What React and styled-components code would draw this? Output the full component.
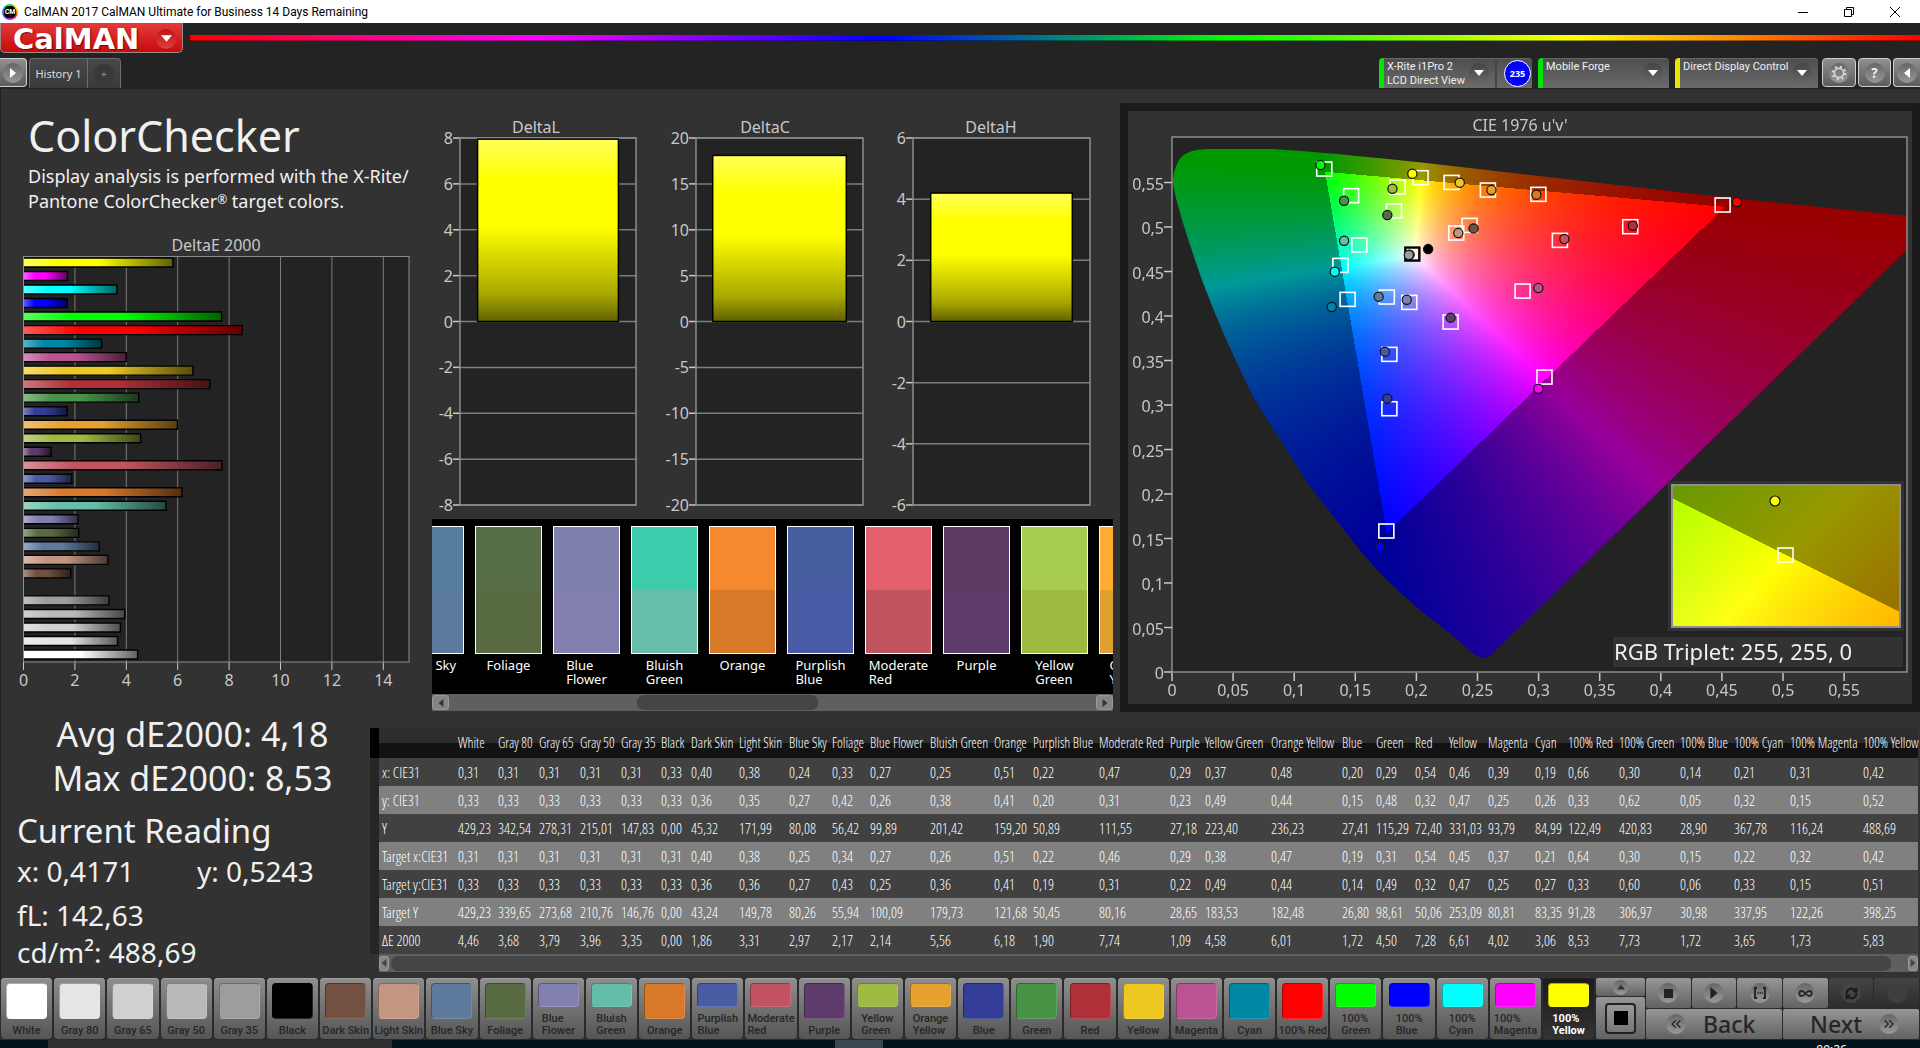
import React, { useEffect, useRef } from 'react';
import styled, { createGlobalStyle } from 'styled-components';
import { ChevronsLeft, ChevronsRight, Infinity as InfinityIcon, RefreshCw } from 'lucide-react';

const GlobalStyle = createGlobalStyle`
  * {
    box-sizing: border-box;
  }
  body {
    margin: 0;
    background: #323232;
    color: #f0f0f0;
    font-family: 'Noto Sans', 'Open Sans', sans-serif;
    overflow: hidden;
  }
  button {
    margin: 0;
    padding: 0;
    border: none;
    font-family: inherit;
    color: inherit;
    cursor: pointer;
  }
`;

/* ---------- data ---------- */

const READINGS = [
  // name, color, x, y, Y, target x, target y, target Y, dE, column width
  ['White', '#ffffff', '0,31', '0,33', '429,23', '0,31', '0,33', '429,23', '4,46', 40],
  ['Gray 80', '#e5e5e5', '0,31', '0,33', '342,54', '0,31', '0,33', '339,65', '3,68', 41],
  ['Gray 65', '#d0d0d0', '0,31', '0,33', '278,31', '0,31', '0,33', '273,68', '3,79', 41],
  ['Gray 50', '#b9b9b9', '0,31', '0,33', '215,01', '0,31', '0,33', '210,76', '3,96', 41],
  ['Gray 35', '#9d9d9d', '0,31', '0,33', '147,83', '0,31', '0,33', '146,76', '3,35', 40],
  ['Black', '#000000', '0,33', '0,33', '0,00', '0,31', '0,33', '0,00', '0,00', 30],
  ['Dark Skin', '#735042', '0,40', '0,36', '45,32', '0,40', '0,36', '43,24', '1,86', 48],
  ['Light Skin', '#c39681', '0,38', '0,35', '171,99', '0,38', '0,36', '149,78', '3,31', 50],
  ['Blue Sky', '#5e7a9c', '0,24', '0,27', '80,08', '0,25', '0,27', '80,26', '2,97', 43],
  ['Foliage', '#596b42', '0,33', '0,42', '56,42', '0,34', '0,43', '55,94', '2,17', 38],
  ['Blue Flower', '#8280b0', '0,27', '0,26', '99,89', '0,27', '0,25', '100,09', '2,14', 60],
  ['Bluish Green', '#63bda9', '0,25', '0,38', '201,42', '0,26', '0,36', '179,73', '5,56', 64],
  ['Orange', '#d87829', '0,51', '0,41', '159,20', '0,51', '0,41', '121,68', '6,18', 39],
  ['Purplish Blue', '#4a5ba5', '0,22', '0,20', '50,89', '0,22', '0,19', '50,45', '1,90', 66],
  ['Moderate Red', '#c25461', '0,47', '0,31', '111,55', '0,46', '0,31', '80,16', '7,74', 71],
  ['Purple', '#5d3c6b', '0,29', '0,23', '27,18', '0,29', '0,22', '28,65', '1,09', 35],
  ['Yellow Green', '#9eba41', '0,37', '0,49', '223,40', '0,38', '0,49', '183,53', '4,58', 66],
  ['Orange Yellow', '#e6a12e', '0,48', '0,44', '236,23', '0,47', '0,44', '182,48', '6,01', 71],
  ['Blue', '#333c96', '0,20', '0,15', '27,41', '0,19', '0,14', '26,80', '1,72', 34],
  ['Green', '#479447', '0,29', '0,48', '115,29', '0,31', '0,49', '98,61', '4,50', 39],
  ['Red', '#af3039', '0,54', '0,32', '72,40', '0,54', '0,32', '50,06', '7,28', 34],
  ['Yellow', '#edc821', '0,46', '0,47', '331,03', '0,45', '0,47', '253,09', '6,61', 39],
  ['Magenta', '#bb5393', '0,39', '0,25', '93,79', '0,37', '0,25', '80,81', '4,02', 47],
  ['Cyan', '#0087a6', '0,19', '0,26', '84,99', '0,21', '0,27', '83,35', '3,06', 33],
  ['100% Red', '#ff0000', '0,66', '0,33', '122,49', '0,64', '0,33', '91,28', '8,53', 51],
  ['100% Green', '#00ff00', '0,30', '0,62', '420,83', '0,30', '0,60', '306,97', '7,73', 61],
  ['100% Blue', '#0000ff', '0,14', '0,05', '28,90', '0,15', '0,06', '30,98', '1,72', 54],
  ['100% Cyan', '#00ffff', '0,21', '0,32', '367,78', '0,22', '0,33', '337,95', '3,65', 56],
  ['100% Magenta', '#ff00ff', '0,31', '0,15', '116,24', '0,32', '0,15', '122,26', '1,73', 73],
  ['100% Yellow', '#ffff00', '0,42', '0,52', '488,69', '0,42', '0,51', '398,25', '5,83', 58],
];

const TABLE_ROWS = ['x: CIE31', 'y: CIE31', 'Y', 'Target x:CIE31', 'Target y:CIE31', 'Target Y', 'ΔE 2000'];

const TWO_LINE = [
  'Blue Flower',
  'Bluish Green',
  'Purplish Blue',
  'Moderate Red',
  'Yellow Green',
  'Orange Yellow',
  '100% Green',
  '100% Blue',
  '100% Cyan',
  '100% Magenta',
  '100% Yellow',
];

const COMPARISONS = [
  { name: 'Blue Sky', actual: '#567d9d', target: '#5e7a9f' },
  { name: 'Foliage', actual: '#566d45', target: '#596b42' },
  { name: 'Blue\nFlower', actual: '#8080ad', target: '#8380b0' },
  { name: 'Bluish\nGreen', actual: '#3dccac', target: '#65bdaa' },
  { name: 'Orange', actual: '#f5892f', target: '#d87829' },
  { name: 'Purplish\nBlue', actual: '#465d9f', target: '#4a5ba5' },
  { name: 'Moderate\nRed', actual: '#e4606e', target: '#c25460' },
  { name: 'Purple', actual: '#5b3b62', target: '#5d3c6b' },
  { name: 'Yellow\nGreen', actual: '#a7cc4e', target: '#9eba41' },
  { name: 'Orange\nYellow', actual: '#ffac31', target: '#e0a030' },
];

// u'v' of the target squares
const TARGETS = [
  [0.1246, 0.5651], [0.2034, 0.5554], [0.2288, 0.5501], [0.2585, 0.5415], [0.2998, 0.5367],
  [0.4506, 0.5247], [0.1846, 0.5449], [0.1466, 0.5352], [0.1817, 0.5179], [0.2435, 0.5018],
  [0.2326, 0.4932], [0.1533, 0.4797], [0.3174, 0.485], [0.375, 0.5003], [0.1378, 0.4569],
  [0.1437, 0.4187], [0.1758, 0.4213], [0.1942, 0.4153], [0.228, 0.3932], [0.2869, 0.428],
  [0.1779, 0.3569], [0.3048, 0.3314], [0.1779, 0.2958], [0.1754, 0.1584],
];

const MEASURED = [
  [0.1215, 0.5696, '#00ff00'], [0.1967, 0.5599, '#ffff00'], [0.1804, 0.543, '#9eba41'],
  [0.2355, 0.5498, '#edc821'], [0.2614, 0.5415, '#e6a12e'], [0.2982, 0.5363, '#d87829'],
  [0.4623, 0.528, '#ff0000'], [0.1408, 0.5295, '#479447'], [0.1762, 0.5134, '#596b42'],
  [0.2468, 0.4984, '#735042'], [0.2343, 0.4932, '#c39681'], [0.1408, 0.4846, '#63bda9'],
  [0.3211, 0.4865, '#c25461'], [0.3771, 0.5014, '#af3039'], [0.1945, 0.469, '#ffffff'],
  [0.1938, 0.4685, '#9d9d9d'], [0.2096, 0.4752, '#000000'], [0.1332, 0.4498, '#00ffff'],
  [0.1307, 0.4101, '#0087a6'], [0.1691, 0.4217, '#5e7a9c'], [0.1921, 0.4183, '#8280b0'],
  [0.228, 0.3981, '#5d3c6b'], [0.2998, 0.4314, '#bb5393'], [0.1742, 0.3599, '#4a5ba5'],
  [0.2998, 0.3183, '#ff00ff'], [0.1762, 0.3071, '#333c96'], [0.1704, 0.1404, '#0000ff'],
];

/* ---------- window chrome ---------- */

const Page = styled.div`
  display: flex;
  flex-direction: column;
  height: 100vh;
  overflow: hidden;
`;

const TitleBar = styled.header`
  flex: none;
  display: flex;
  align-items: center;
  height: 23px;
  padding: 0 15px 0 2px;
  background: #ffffff;
  color: #000000;
  font-family: Roboto, 'Noto Sans', sans-serif;
  font-size: 12px;
`;

const AppIcon = styled.span`
  display: grid;
  place-items: center;
  width: 16px;
  height: 16px;
  margin-right: 6px;
  border-radius: 50%;
  background: radial-gradient(circle, #000 55%, transparent 58%),
    conic-gradient(#1de03c, #ffe600, #ff2a2a, #d022e0, #3344ff, #18c5d8, #1de03c);
  color: #ffffff;
  font-size: 7px;
  font-weight: 700;
`;

const WindowButtons = styled.div`
  display: flex;
  gap: 26px;
  margin-left: auto;
`;

const WindowButton = styled.button`
  width: 20px;
  height: 20px;
  background: transparent;
  svg {
    display: block;
    margin: auto;
  }
`;

const AppBar = styled.div`
  flex: none;
  background: #232323;
  padding-bottom: 1px;
`;

const BrandRow = styled.div`
  display: flex;
  align-items: center;
  gap: 7px;
  height: 30px;
  margin-bottom: 5px;
`;

const BrandButton = styled.button`
  display: flex;
  align-items: center;
  justify-content: space-between;
  width: 183px;
  height: 30px;
  padding: 2px 6px 0 12px;
  border: 1px solid #9a8a8a;
  border-top: none;
  border-radius: 0 0 5px 5px;
  background: linear-gradient(#e23b3b, #c80a0a);
  font-family: 'DejaVu Sans', sans-serif;
  font-size: 29px;
  font-weight: 700;
  line-height: 28px;
  color: #ffffff;
  text-shadow: 1px 1px 1px #7a0000;
`;

const Spectrum = styled.div`
  flex: 1;
  height: 6px;
  border-bottom: 1px solid rgba(0, 0, 0, 0.4);
  background: linear-gradient(to right, #f00, #f0f 20%, #00f 40%, #0f0 60%, #ff0 80%, #f00);
`;

const Round = styled.span`
  display: grid;
  place-items: center;
  flex: none;
  width: ${({ $size }) => $size || 20}px;
  height: ${({ $size }) => $size || 20}px;
  border-radius: 50%;
  background: ${({ $tone }) => $tone || 'linear-gradient(#666, #999)'};
`;

const ToolRow = styled.div`
  display: flex;
  align-items: flex-start;
  height: 30px;
`;

const MetalButton = styled.button`
  display: grid;
  place-items: center;
  flex: none;
  width: ${({ $width }) => $width || 33}px;
  height: 29px;
  margin-right: 2px;
  border: 1px solid #d0d0d0;
  border-radius: 4px;
  background: linear-gradient(#8f8f8f, #5c5c5c);
  ${({ $edge }) => $edge === 'left' && 'border-left: none; border-radius: 0 4px 4px 0;'}
  ${({ $edge }) => $edge === 'right' && 'border-right: none; border-radius: 4px 0 0 4px; margin-right: 0;'}
`;

const Tab = styled.button`
  display: grid;
  place-items: center;
  width: ${({ $width }) => $width}px;
  height: 30px;
  border: 1px solid #6d6d6d;
  border-bottom: none;
  border-radius: ${({ $last }) => ($last ? '0 4px 0 0' : '4px 0 0 0')};
  margin-left: ${({ $last }) => ($last ? '-1px' : '0')};
  background: linear-gradient(#484848, #3a3a3a);
  color: ${({ $last }) => ($last ? '#8a8a8a' : '#dcdcdc')};
  font-size: 11px;
`;

const DeviceGroup = styled.div`
  display: flex;
  gap: 6px;
  margin: 0 4px 0 auto;
`;

const Device = styled.div`
  display: flex;
  width: ${({ $width }) => $width}px;
  height: 30px;
  border-radius: 4px 4px 0 0;
  border-left: 5px solid ${({ $status }) => $status};
  background: linear-gradient(#4d4d4d, #6b6b6b);
  box-shadow: inset 0 1px 0 #666;
`;

const DeviceButton = styled.button`
  display: flex;
  align-items: center;
  justify-content: space-between;
  flex: 1;
  padding: 0 6px 0 3px;
  background: transparent;
  font-family: Roboto, 'Noto Sans', sans-serif;
  font-size: 11px;
  line-height: 14px;
  text-align: left;
  color: #f0f0f0;
`;

const DeviceName = styled.span`
  align-self: flex-start;
  padding-top: 2px;
  white-space: pre;
`;

const Level = styled.button`
  align-self: center;
  width: 27px;
  height: 27px;
  margin: 0 1px 0 7px;
  border: 1px solid #ffffff;
  border-radius: 50%;
  background: #0000ff;
  color: #ffffff;
  font-size: 9px;
  font-weight: 700;
`;

const Divider = styled.span`
  width: 2px;
  margin: 3px 0 0;
  background: #444;
`;

/* ---------- workspace ---------- */

const Workspace = styled.main`
  flex: 1;
  min-height: 0;
  box-shadow: inset 1px 0 0 #222;
`;

const Upper = styled.div`
  display: grid;
  grid-template-columns: minmax(0, 27fr) minmax(0, 43fr) minmax(0, 50fr);
  align-items: start;
`;

const Intro = styled.section`
  padding-top: 23px;
`;

const Heading = styled.h1`
  margin: 0 0 4px 28px;
  font-size: 43px;
  font-weight: 400;
  line-height: 48px;
`;

const Lead = styled.p`
  margin: 0 0 0 28px;
  font-size: 18px;
  line-height: 25px;
  sup {
    font-size: 12px;
    line-height: 0;
    vertical-align: 4px;
  }
`;

const Chart = styled.svg`
  display: block;
  width: 100%;
  height: auto;
  font-size: 16px;
  fill: #c8c8c8;
`;

const Middle = styled.section`
  padding-right: 7px;
`;

const DeltaRow = styled.div`
  display: grid;
  grid-template-columns: 229fr 226fr 226fr;
`;

const Strip = styled.div`
  height: 175px;
  overflow: hidden;
  background: #000000;
`;

const StripTrack = styled.div`
  display: flex;
  margin-left: -35px;
  padding-top: 7px;
`;

const StripItem = styled.div`
  display: flex;
  flex-direction: column;
  align-items: center;
  flex: 0 0 78px;
  padding-right: 11px;
`;

const StripColor = styled.div`
  width: 67px;
  height: 128px;
  border: 1px solid #ffffff;
  background: linear-gradient(${({ $actual, $target }) => `${$actual} 50%, ${$target} 50%`});
`;

const StripLabel = styled.span`
  margin-top: 4px;
  font-size: 13px;
  line-height: 14px;
  white-space: pre;
  color: #ffffff;
`;

const ScrollBar = styled.div`
  display: flex;
  align-items: center;
  height: ${({ $height }) => $height}px;
  background: #5f5f5f;
`;

const ScrollButton = styled.button`
  display: grid;
  place-items: center;
  width: ${({ $width }) => $width}px;
  height: 15px;
  border: 1px solid #999;
  border-radius: 3px;
  background: #858585;
`;

const ScrollTrack = styled.div`
  flex: 1;
  display: flex;
  padding: 0 2px;
`;

const ScrollThumb = styled.div`
  width: ${({ $size }) => $size}%;
  height: 15px;
  margin-left: ${({ $start }) => $start}%;
  border-radius: 7px;
  background: #454545;
`;

const CiePanel = styled.section`
  display: grid;
  margin-top: 14px;
  border: 8px solid #1b1b1b;
  canvas,
  svg {
    grid-area: 1 / 1;
    width: 100%;
    height: auto;
  }
`;

const Lower = styled.div`
  display: flex;
  padding-right: 2px;
`;

const Summary = styled.section`
  flex: 0 0 370px;
  white-space: nowrap;
`;

const Averages = styled.div`
  margin-bottom: 9px;
  padding-left: 15px;
  font-size: 34px;
  line-height: 44px;
  text-align: center;
`;

const ReadingTitle = styled.h2`
  margin: 0 0 1px 17px;
  font-size: 33px;
  font-weight: 400;
  line-height: 44px;
`;

const ReadingLine = styled.div`
  display: grid;
  grid-template-columns: 180px 1fr;
  margin: 0 0 ${({ $gap }) => $gap}px 17px;
  font-size: 28px;
  line-height: 34px;
`;

const TableBox = styled.section`
  flex: 1;
  min-width: 0;
  margin-top: 16px;
`;

const Table = styled.table`
  width: 100%;
  table-layout: fixed;
  border-collapse: collapse;
  font-family: 'Open Sans Condensed Light', 'Open Sans Condensed', 'Roboto Condensed', Roboto, sans-serif;
  font-size: 15px;
  line-height: 20px;
  white-space: nowrap;
  color: #ffffff;
  th,
  td {
    height: 28px;
    padding: 0 0 0 3px;
    font-weight: 300;
    text-align: left;
  }
  thead th {
    height: 30px;
    background: linear-gradient(#2d2d2d 50%, #121212 50%);
    font-size: 14px;
  }
  tbody tr {
    background: #414141;
  }
  tbody tr:nth-child(even) {
    background: #808080;
  }
`;

const Gutter = styled.td`
  background: ${({ $head }) => ($head ? '#000' : '#262626')};
`;

const TableScroll = styled.div`
  margin-left: 9px;
`;

/* ---------- bottom bar ---------- */

const BottomBar = styled.nav`
  flex: none;
  display: flex;
  height: 62px;
  padding: 0 1px 1px 0;
  background: #2b2b2b;
`;

const Patches = styled.div`
  flex: 1;
  display: flex;
  min-width: 0;
`;

const PatchButton = styled.button`
  flex: 1 1 0;
  display: flex;
  flex-direction: column;
  align-items: center;
  justify-content: space-between;
  min-width: 0;
  margin: 0 1px;
  padding: 5px 0 2px;
  border-radius: 4px;
  background: ${({ $active }) =>
    $active ? 'linear-gradient(#1a1a1a, #333)' : 'linear-gradient(#8e8e8e, #555)'};
  box-shadow: inset 0 1px 0 ${({ $active }) => ($active ? '#222' : '#a0a0a0')};
  font-family: Roboto, 'Noto Sans', sans-serif;
  font-size: 11px;
  font-weight: ${({ $active }) => ($active ? 700 : 500)};
  line-height: 12px;
  text-align: left;
  white-space: pre;
  color: ${({ $active }) => ($active ? '#fff' : '#262626')};
`;

const Patch = styled.span`
  width: 41px;
  height: ${({ $short }) => ($short ? 24 : 36)}px;
  border: 1px solid rgba(255, 255, 255, 0.15);
  border-radius: 4px;
  border-top-color: rgba(0, 0, 0, 0.3);
  border-left-color: rgba(0, 0, 0, 0.3);
  background: ${({ $color }) => $color};
`;

const PatternBox = styled.div`
  display: flex;
  flex-direction: column;
  gap: 1px;
  width: 49px;
  margin: 0 1px;
`;

const PanelButton = styled.button`
  flex: ${({ $grow }) => $grow || 1};
  display: flex;
  align-items: center;
  justify-content: center;
  border-radius: 2px;
  background: ${({ $dim }) => ($dim ? 'linear-gradient(#444, #2c2c2c)' : 'linear-gradient(#969696, #626262)')};
  color: ${({ $dim }) => ($dim ? '#1c1c1c' : '#262626')};
`;

const PatternPreview = styled.span`
  display: grid;
  place-items: center;
  width: 31px;
  height: 31px;
  border: 2px solid #222;
  border-radius: 4px;
  background: linear-gradient(#999, #777);
`;

const Controls = styled.div`
  display: grid;
  grid-template-rows: 30px 30px;
  gap: 1px;
  width: 273px;
`;

const ControlRow = styled.div`
  display: flex;
  gap: 1px;
`;

const NavButton = styled(PanelButton)`
  justify-content: ${({ $align }) => $align};
  gap: 17px;
  padding: 0 20px;
  font-size: 23px;
  font-weight: 500;
  line-height: 28px;
`;

const TaskBar = styled.footer`
  flex: none;
  display: flex;
  height: 8px;
  overflow: hidden;
  background: #04141d;
`;

const TaskItem = styled.span`
  width: ${({ $width }) => $width}px;
  margin-left: ${({ $offset }) => $offset}px;
  background: ${({ $color }) => $color};
`;

const Clock = styled.time`
  margin: 3px 73px 0 auto;
  font-size: 12px;
  line-height: 14px;
  color: #ffffff;
`;

/* ---------- icons ---------- */

const Arrow = ({ dir = 'down', size = 8, color = '#fff' }) => {
  const points = {
    down: '0,2 10,2 5,8',
    up: '0,8 10,8 5,2',
    left: '8,0 8,10 2,5',
    right: '2,0 2,10 8,5',
  };
  return (
    <svg width={size} height={size} viewBox="0 0 10 10">
      <polygon points={points[dir]} fill={color} />
    </svg>
  );
};

const Gear = () => (
  <svg width="18" height="18" viewBox="0 0 18 18" fill="none" stroke="#d8d8d8">
    <circle cx="9" cy="9" r="4.6" strokeWidth="1.6" />
    <circle cx="9" cy="9" r="6.4" strokeWidth="2" strokeDasharray="2.2 2.83" />
  </svg>
);

/* ---------- charts ---------- */

const toNumber = (text) => Number(text.replace(',', '.'));

const DeltaEChart = () => {
  const left = 23.5;
  const top = 42.5;
  const right = 409;
  const bottom = 448;
  const unit = (right - left) / 15;
  const pitch = (bottom - top) / READINGS.length;
  const bars = [...READINGS].reverse();

  return (
    <Chart viewBox="0 0 432 486" role="img" aria-label="DeltaE 2000">
      <defs>
        <linearGradient id="barShade">
          <stop offset="0" stopColor="#fff" stopOpacity="0.35" />
          <stop offset="0.25" stopColor="#fff" stopOpacity="0" />
          <stop offset="0.5" stopColor="#000" stopOpacity="0" />
          <stop offset="1" stopColor="#000" stopOpacity="0.62" />
        </linearGradient>
      </defs>
      <text x="216" y="37" textAnchor="middle">DeltaE 2000</text>
      <rect x={left} y={top} width={right - left} height={bottom - top} fill="#232323" />
      {[0, 2, 4, 6, 8, 10, 12, 14].map((tick) => (
        <g key={tick}>
          <path d={`M${left + tick * unit} ${top}V${bottom}`} stroke="#7d7d7d" />
          <path d={`M${left + tick * unit} ${bottom}v8`} stroke="#c8c8c8" />
          <text x={left + tick * unit} y="472" textAnchor="middle">{tick}</text>
        </g>
      ))}
      <rect x={left} y={top} width={right - left} height={bottom - top} fill="none" stroke="#8d8d8d" />
      {bars.map(([name, color, , , , , , , dE], i) => {
        const width = toNumber(dE) * unit - 1;
        if (width <= 0) return null;
        const bar = { x: left + 0.5, y: top + i * pitch + 1.5, width, height: 9 };
        return (
          <g key={name}>
            <rect {...bar} fill={color} />
            <rect {...bar} fill="url(#barShade)" />
            <path d={`M${bar.x} ${bar.y}h${width}v9H${bar.x}`} fill="none" stroke="#000" strokeWidth="1.4" />
          </g>
        );
      })}
    </Chart>
  );
};

const DeltaChart = ({ title, width, left, right, limit, step, value }) => {
  const top = 49;
  const zero = 232.5;
  const unit = (zero - top) / limit;
  const ticks = [];
  for (let t = limit; t >= -limit; t -= step) ticks.push(t);
  const inset = (right - left) * 0.1;
  const barTop = zero - value * unit;

  return (
    <Chart viewBox={`0 0 ${width} 430`} role="img" aria-label={title}>
      <defs>
        <linearGradient id={`fill${title}`} x2="0" y2="1">
          <stop offset="0" stopColor="#ffff5a" />
          <stop offset="0.22" stopColor="#ffff00" />
          <stop offset="0.48" stopColor="#ffff00" />
          <stop offset="0.85" stopColor="#a8a800" />
          <stop offset="1" stopColor="#606000" />
        </linearGradient>
      </defs>
      <text x="104" y="44" textAnchor="middle">{title}</text>
      <rect x={left} y={top} width={right - left} height="367" fill="#232323" />
      {ticks.map((t) => (
        <g key={t}>
          <path d={`M${left} ${zero - t * unit}H${right}`} stroke="#7d7d7d" strokeWidth="1.5" />
          <path d={`M${left - 7} ${zero - t * unit}h7`} stroke="#c8c8c8" strokeWidth="1.5" />
          <text x={left - 7} y={zero - t * unit + 6} textAnchor="end">{t}</text>
        </g>
      ))}
      <rect x={left} y={top} width={right - left} height="367" fill="none" stroke="#8d8d8d" strokeWidth="1.5" />
      <rect
        x={left + inset}
        y={barTop}
        width={right - left - inset * 2}
        height={zero - barTop}
        fill={`url(#fill${title})`}
        stroke="#000"
        strokeWidth="1.5"
      />
    </Chart>
  );
};

const CIE_WIDTH = 784;
const CIE_HEIGHT = 593;
const ORIGIN = { x: 44, y: 561 };
const SCALE = { u: 1222, v: 890 };
const LOCUS =
  'M45 72Q45 59 51 49Q58 38 81 38L145 38Q196 41 298 52L594 86L779 105V139L364 543Q355 551 346 543' +
  'L324 524L293 500Q258 470 234 442L181 374L127 289Q95 226 74 169Q48 95 45 72Z';
const INSET = { x: 544, y: 374, width: 228, height: 142 };

const comma = (n) => String(Number(n.toFixed(2))).replace('.', ',');

// xy chromaticity to the brightest linear RGB, dimmed outside of the Rec. 709 triangle
const chromaToRgb = (x, y) => {
  const X = x / y;
  const Z = (1 - x - y) / y;
  const rgb = [
    3.2406 * X - 1.5372 - 0.4986 * Z,
    -0.9689 * X + 1.8758 + 0.0415 * Z,
    0.0557 * X - 0.204 + 1.057 * Z,
  ];
  const max = Math.max(...rgb);
  const dim = Math.min(...rgb) < -0.001 * max ? 0.6 : 1;
  return rgb.map((c) => (255 * dim * Math.max(c, 0)) / max);
};

const shade = (width, height, toXy) => {
  const canvas = document.createElement('canvas');
  canvas.width = width;
  canvas.height = height;
  const ctx = canvas.getContext('2d');
  const image = ctx.createImageData(width, height);
  for (let py = 0; py < height; py++) {
    for (let px = 0; px < width; px++) {
      const [x, y] = toXy(px, py);
      const [r, g, b] = chromaToRgb(x, y);
      image.data.set([r, g, b, 255], (py * width + px) * 4);
    }
  }
  ctx.putImageData(image, 0, 0);
  return canvas;
};

const CieChart = () => {
  const canvasRef = useRef(null);

  useEffect(() => {
    const ctx = canvasRef.current.getContext('2d');
    ctx.fillStyle = '#323232';
    ctx.fillRect(0, 0, CIE_WIDTH, CIE_HEIGHT);
    ctx.fillStyle = '#232323';
    ctx.fillRect(44, 26, 735, 535);

    const gamut = shade(CIE_WIDTH, CIE_HEIGHT, (px, py) => {
      const u = (px - ORIGIN.x) / SCALE.u;
      const v = Math.max((ORIGIN.y - py) / SCALE.v, 0.001);
      const d = 6 * u - 16 * v + 12;
      return [(9 * u) / d, (4 * v) / d];
    });
    ctx.save();
    ctx.clip(new Path2D(LOCUS));
    ctx.drawImage(gamut, 0, 0);
    ctx.restore();

    // magnified area round the current target
    const zoomed = shade(INSET.width, INSET.height, (px, py) => [
      0.4193 + (px - 114) / 4450,
      0.5053 - (py - 71) / 2800,
    ]);
    ctx.fillStyle = '#323232';
    ctx.fillRect(INSET.x - 4, INSET.y - 4, INSET.width + 8, INSET.height + 8);
    ctx.drawImage(zoomed, INSET.x, INSET.y);
    ctx.fillRect(485, 526, 290, 30);
  }, []);

  const xOf = (u) => ORIGIN.x + u * SCALE.u;
  const yOf = (v) => ORIGIN.y - v * SCALE.v;
  const ticks = Array.from({ length: 12 }, (_, i) => i * 0.05);

  return (
    <CiePanel>
      <canvas ref={canvasRef} width={CIE_WIDTH} height={CIE_HEIGHT} />
      <Chart viewBox={`0 0 ${CIE_WIDTH} ${CIE_HEIGHT}`} role="img" aria-label="CIE 1976 u'v'">
        <text x="392" y="20" textAnchor="middle">CIE 1976 u'v'</text>
        <rect x="44" y="26" width="735" height="535" fill="none" stroke="#8d8d8d" strokeWidth="1.5" />
        {ticks.map((t) => (
          <g key={t}>
            <path d={`M${xOf(t)} 562v8M44 ${yOf(t)}h-8`} stroke="#c8c8c8" strokeWidth="1.5" />
            <text x={xOf(t)} y="585" textAnchor="middle">{comma(t)}</text>
            <text x="36" y={yOf(t) + 7} textAnchor="end">{comma(t)}</text>
          </g>
        ))}
        {TARGETS.map(([u, v]) => (
          <rect key={`${u}-${v}`} x={xOf(u) - 7.5} y={yOf(v) - 7} width="15" height="14" fill="none" stroke="#fff" strokeWidth="1.6" />
        ))}
        <rect x={xOf(0.1967) - 7} y={yOf(0.4696) - 6.5} width="14" height="13" fill="none" stroke="#000" strokeWidth="2.4" />
        {MEASURED.map(([u, v, color]) => (
          <circle key={color} cx={xOf(u)} cy={yOf(v)} r="4.6" fill={color} stroke="#111" strokeWidth="1.2" />
        ))}
        <rect {...INSET} fill="none" stroke="#8d8d8d" strokeWidth="2" />
        <rect x="650" y="437" width="15" height="14" fill="none" stroke="#fff" strokeWidth="1.6" />
        <circle cx="647" cy="390" r="5" fill="#ff0" stroke="#111" strokeWidth="1.2" />
        <text x="486" y="549" fontSize="22" fill="#f0f0f0">RGB Triplet: 255, 255, 0</text>
      </Chart>
    </CiePanel>
  );
};

/* ---------- sections ---------- */

const ToolBar = () => (
  <ToolRow>
    <MetalButton $width={27} $edge="left" aria-label="Show panel">
      <Round><Arrow dir="right" size={10} /></Round>
    </MetalButton>
    <Tab $width={59}>History 1</Tab>
    <Tab $width={34} $last aria-label="Add history">
      <Round $tone="#383838">+</Round>
    </Tab>
    <DeviceGroup>
      <Device $width={153} $status="#00e600">
        <DeviceButton>
          <DeviceName>{'X-Rite i1Pro 2\nLCD Direct View'}</DeviceName>
          <Round $tone="linear-gradient(#444, #666)"><Arrow size={10} /></Round>
        </DeviceButton>
        <Divider />
        <Level>235</Level>
      </Device>
      <Device $width={131} $status="#00e600">
        <DeviceButton>
          <DeviceName>Mobile Forge</DeviceName>
          <Round $tone="linear-gradient(#444, #666)"><Arrow size={10} /></Round>
        </DeviceButton>
      </Device>
      <Device $width={143} $status="#e6e600">
        <DeviceButton>
          <DeviceName>Direct Display Control</DeviceName>
          <Round $tone="linear-gradient(#444, #666)"><Arrow size={10} /></Round>
        </DeviceButton>
      </Device>
    </DeviceGroup>
    <MetalButton $width={34} aria-label="Settings">
      <Round><Gear /></Round>
    </MetalButton>
    <MetalButton aria-label="Help">
      <Round><b>?</b></Round>
    </MetalButton>
    <MetalButton $width={27} $edge="right" aria-label="Collapse">
      <Round><Arrow dir="left" size={10} /></Round>
    </MetalButton>
  </ToolRow>
);

const ReadingsTable = () => (
  <TableBox>
    <Table>
      <colgroup>
        <col width="9" />
        <col width="76" />
        {READINGS.map((r) => (
          <col key={r[0]} width={r[9]} />
        ))}
      </colgroup>
      <thead>
        <tr>
          <Gutter $head />
          <th aria-label="Value" />
          {READINGS.map(([name]) => (
            <th key={name} scope="col">{name}</th>
          ))}
        </tr>
      </thead>
      <tbody>
        {TABLE_ROWS.map((label, row) => (
          <tr key={label}>
            <Gutter />
            <th scope="row">{label}</th>
            {READINGS.map((r) => (
              <td key={r[0]}>{r[row + 2]}</td>
            ))}
          </tr>
        ))}
      </tbody>
    </Table>
    <TableScroll>
      <ScrollBar $height={18}>
        <ScrollButton $width={10} aria-label="Scroll left"><Arrow dir="left" color="#444" /></ScrollButton>
        <ScrollTrack><ScrollThumb $start={0} $size={99} /></ScrollTrack>
        <ScrollButton $width={10} aria-label="Scroll right"><Arrow dir="right" color="#444" /></ScrollButton>
      </ScrollBar>
    </TableScroll>
  </TableBox>
);

const Footer = () => (
  <BottomBar>
    <Patches>
      {READINGS.map(([name, color]) => {
        const short = TWO_LINE.includes(name);
        return (
          <PatchButton key={name} $active={name === '100% Yellow'}>
            <Patch $color={color} $short={short} />
            <span>{short ? name.replace(' ', '\n') : name}</span>
          </PatchButton>
        );
      })}
    </Patches>
    <PatternBox>
      <PanelButton $grow="0 0 18px" aria-label="Expand patterns">
        <Round $size={15}><Arrow dir="up" color="#333" /></Round>
      </PanelButton>
      <PanelButton aria-label="Pattern window">
        <PatternPreview>
          <svg width="14" height="14"><rect width="14" height="14" fill="#000" /></svg>
        </PatternPreview>
      </PanelButton>
    </PatternBox>
    <Controls>
      <ControlRow>
        <PanelButton aria-label="Stop">
          <Round><svg width="9" height="9"><rect width="9" height="9" fill="#222" /></svg></Round>
        </PanelButton>
        <PanelButton aria-label="Read once">
          <Round><Arrow dir="right" size={12} color="#222" /></Round>
        </PanelButton>
        <PanelButton aria-label="Read series">
          <Round>
            <svg width="14" height="12" viewBox="0 0 14 12" fill="none" stroke="#222" strokeWidth="1.8">
              <path d="M4 1H2v10h2M10 1h2v10h-2" />
              <path d="M4.5 6h5.5" strokeWidth="1.6" strokeDasharray="1.4 0.8" />
            </svg>
          </Round>
        </PanelButton>
        <PanelButton aria-label="Read continuous">
          <Round><InfinityIcon size={15} strokeWidth={3} /></Round>
        </PanelButton>
        <PanelButton $dim aria-label="Refresh">
          <Round $tone="#444"><RefreshCw size={13} strokeWidth={4} /></Round>
        </PanelButton>
        <PanelButton $dim aria-label="Blank">
          <Round $tone="#3f3f3f" />
        </PanelButton>
      </ControlRow>
      <ControlRow>
        <NavButton $align="flex-start">
          <Round><ChevronsLeft size={16} /></Round>
          Back
        </NavButton>
        <NavButton $align="flex-end">
          Next
          <Round><ChevronsRight size={16} /></Round>
        </NavButton>
      </ControlRow>
    </Controls>
  </BottomBar>
);

const App = () => {
  return (
    <Page>
      <GlobalStyle />
      <TitleBar>
        <AppIcon>CM</AppIcon>
        CalMAN 2017 CalMAN Ultimate for Business 14 Days Remaining
        <WindowButtons>
          <WindowButton aria-label="Minimize">
            <svg width="10" height="10"><path d="M0 5.5h10" stroke="#000" /></svg>
          </WindowButton>
          <WindowButton aria-label="Restore">
            <svg width="10" height="10" fill="none" stroke="#000">
              <path d="M0.5 2.5h7v7h-7zM2.5 2.5v-2h7v7h-2" />
            </svg>
          </WindowButton>
          <WindowButton aria-label="Close">
            <svg width="10" height="10"><path d="M0 0l10 10M10 0L0 10" stroke="#000" /></svg>
          </WindowButton>
        </WindowButtons>
      </TitleBar>

      <AppBar>
        <BrandRow>
          <BrandButton>
            CalMAN
            <Round $tone="linear-gradient(#c01414, #e04040)"><Arrow size={11} /></Round>
          </BrandButton>
          <Spectrum />
        </BrandRow>
        <ToolBar />
      </AppBar>

      <Workspace>
        <Upper>
          <Intro>
            <Heading>ColorChecker</Heading>
            <Lead>
              Display analysis is performed with the X-Rite/
              <br />
              Pantone ColorChecker<sup>®</sup> target colors.
            </Lead>
            <DeltaEChart />
          </Intro>
          <Middle>
            <DeltaRow>
              <DeltaChart title="DeltaL" width={229} left={28} right={204} limit={8} step={2} value={7.95} />
              <DeltaChart title="DeltaC" width={226} left={35} right={202} limit={20} step={5} value={18.1} />
              <DeltaChart title="DeltaH" width={226} left={26} right={203} limit={6} step={2} value={4.2} />
            </DeltaRow>
            <Strip>
              <StripTrack>
                {COMPARISONS.map(({ name, actual, target }) => (
                  <StripItem key={name}>
                    <StripColor $actual={actual} $target={target} />
                    <StripLabel>{name}</StripLabel>
                  </StripItem>
                ))}
              </StripTrack>
            </Strip>
            <ScrollBar $height={17}>
              <ScrollButton $width={17} aria-label="Scroll left"><Arrow dir="left" color="#333" /></ScrollButton>
              <ScrollTrack><ScrollThumb $start={29} $size={28} /></ScrollTrack>
              <ScrollButton $width={17} aria-label="Scroll right"><Arrow dir="right" color="#333" /></ScrollButton>
            </ScrollBar>
          </Middle>
          <CieChart />
        </Upper>

        <Lower>
          <Summary>
            <Averages>
              <div>Avg dE2000: 4,18</div>
              <div>Max dE2000: 8,53</div>
            </Averages>
            <ReadingTitle>Current Reading</ReadingTitle>
            <ReadingLine $gap={10}>
              <span>x: 0,4171</span>
              <span>y: 0,5243</span>
            </ReadingLine>
            <ReadingLine $gap={3}>fL: 142,63</ReadingLine>
            <ReadingLine $gap={0}>cd/m²: 488,69</ReadingLine>
          </Summary>
          <ReadingsTable />
        </Lower>
      </Workspace>

      <Footer />
      <TaskBar>
        <TaskItem $width={344} $offset={48} $color="#303030" />
        <TaskItem $width={48} $offset={443} $color="#3a4750" />
        <Clock>09:26</Clock>
      </TaskBar>
    </Page>
  );
};

export default App;
